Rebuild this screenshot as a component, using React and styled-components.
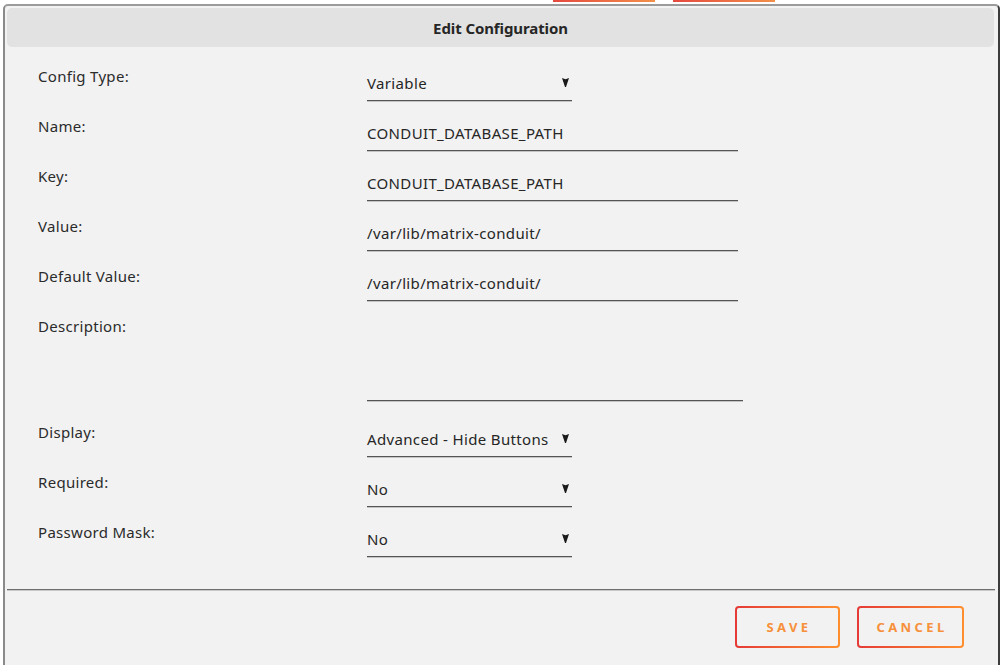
import React from "react";
import styled, { createGlobalStyle } from "styled-components";

const Global = createGlobalStyle`
  html, body { margin: 0; padding: 0; background: #ffffff; }
  body { font-family: "Noto Sans", "Open Sans", sans-serif; color: #2f2f2f; }
  * { box-sizing: border-box; }
`;

const Page = styled.div`
  width: 1000px;
  height: 665px;
  overflow: hidden;
  display: flex;
  flex-direction: column;
  background: #ffffff;
`;

const BehindBar = styled.div`
  height: 4px;
  display: flex;
  gap: 18px;
  padding-left: 553px;
`;

const BehindButton = styled.div`
  width: ${(p) => p.$w}px;
  height: 2px;
  background: linear-gradient(90deg, #e5493f, #f2904a);
`;

const Dialog = styled.div`
  flex: 1;
  margin-left: 3px;
  background: #f2f2f2;
  border-top: 2px solid #9b9b9b;
  border-left: 2px solid #8a8a8a;
  border-right: 2px solid #3c3c3c;
  border-radius: 5px 5px 0 0;
  display: flex;
  flex-direction: column;
`;

const Header = styled.div`
  margin: 2px 4px 0 2px;
  height: 39px;
  background: #e2e2e2;
  border-radius: 5px;
  display: flex;
  align-items: center;
  justify-content: center;
  font-weight: 700;
  font-size: 15px;
  color: #262626;
  letter-spacing: -0.1px;
`;

const Form = styled.div`
  padding: 19px 0 0 33px;
  display: flex;
  flex-direction: column;
  gap: 15px;
`;

const Row = styled.div`
  display: flex;
  align-items: flex-start;
  margin-bottom: ${(p) => p.$extra || 0}px;
`;

const Label = styled.div`
  width: 329px;
  flex: none;
  font-size: 15px;
  line-height: 20px;
  letter-spacing: 0.3px;
  color: #2b2b2b;
`;

const Field = styled.div`
  width: ${(p) => p.$w}px;
  height: ${(p) => p.$h || 35}px;
  border-bottom: 1px solid #555555;
  box-shadow: 0 1px 0 #c4c4c4;
  display: flex;
  align-items: ${(p) => (p.$top ? "flex-start" : "center")};
  justify-content: space-between;
  padding-right: 3px;
  font-size: 15px;
  letter-spacing: 0.35px;
  color: #262626;
`;

const Arrow = styled.svg`
  width: 7px;
  height: 9px;
  margin-top: -1px;
`;

const Divider = styled.div`
  margin: 32px 3px 0 2px;
  height: 1px;
  background: #6e6e6e;
  box-shadow: 0 1px 0 #c8c8c8;
`;

const Footer = styled.div`
  display: flex;
  justify-content: flex-end;
  gap: 17px;
  padding: 16px 34px 0 0;
`;

const Button = styled.button`
  width: ${(p) => p.$w}px;
  height: 42px;
  border: 2px solid transparent;
  border-radius: 4px;
  background: linear-gradient(#f2f2f2, #f2f2f2) padding-box,
    linear-gradient(90deg, #e53a36, #ff8f2e) border-box;
  color: #f7903a;
  font-family: "Noto Sans", "Open Sans", sans-serif;
  font-weight: 700;
  font-size: 13px;
  letter-spacing: 3.4px;
  padding: 0 0 0 3px;
  cursor: pointer;
`;

const DownArrow = () => (
  <Arrow viewBox="0 0 7 9">
    <path d="M0 0 L3.5 1.3 L7 0 L4 9 L3 9 Z" fill="#1a1a1a" />
  </Arrow>
);

const rows = [
  { label: "Config Type:", value: "Variable", select: true },
  { label: "Name:", value: "CONDUIT_DATABASE_PATH", w: 371 },
  { label: "Key:", value: "CONDUIT_DATABASE_PATH", w: 371 },
  { label: "Value:", value: "/var/lib/matrix-conduit/", w: 371 },
  { label: "Default Value:", value: "/var/lib/matrix-conduit/", w: 371 },
  { label: "Description:", value: "", w: 376, h: 85, textarea: true, extra: 6 },
  { label: "Display:", value: "Advanced - Hide Buttons", select: true },
  { label: "Required:", value: "No", select: true },
  { label: "Password Mask:", value: "No", select: true },
];

export default function App() {
  return (
    <Page>
      <Global />
      <BehindBar>
        <BehindButton $w={102} />
        <BehindButton $w={102} />
      </BehindBar>
      <Dialog>
        <Header>Edit Configuration</Header>
        <Form>
          {rows.map((r) => (
            <Row key={r.label} $extra={r.extra}>
              <Label>{r.label}</Label>
              <Field $w={r.select ? 205 : r.w} $h={r.h} $top={r.textarea}>
                <span>{r.value}</span>
                {r.select && <DownArrow />}
              </Field>
            </Row>
          ))}
        </Form>
        <Divider />
        <Footer>
          <Button $w={105}>SAVE</Button>
          <Button $w={107}>CANCEL</Button>
        </Footer>
      </Dialog>
    </Page>
  );
}
